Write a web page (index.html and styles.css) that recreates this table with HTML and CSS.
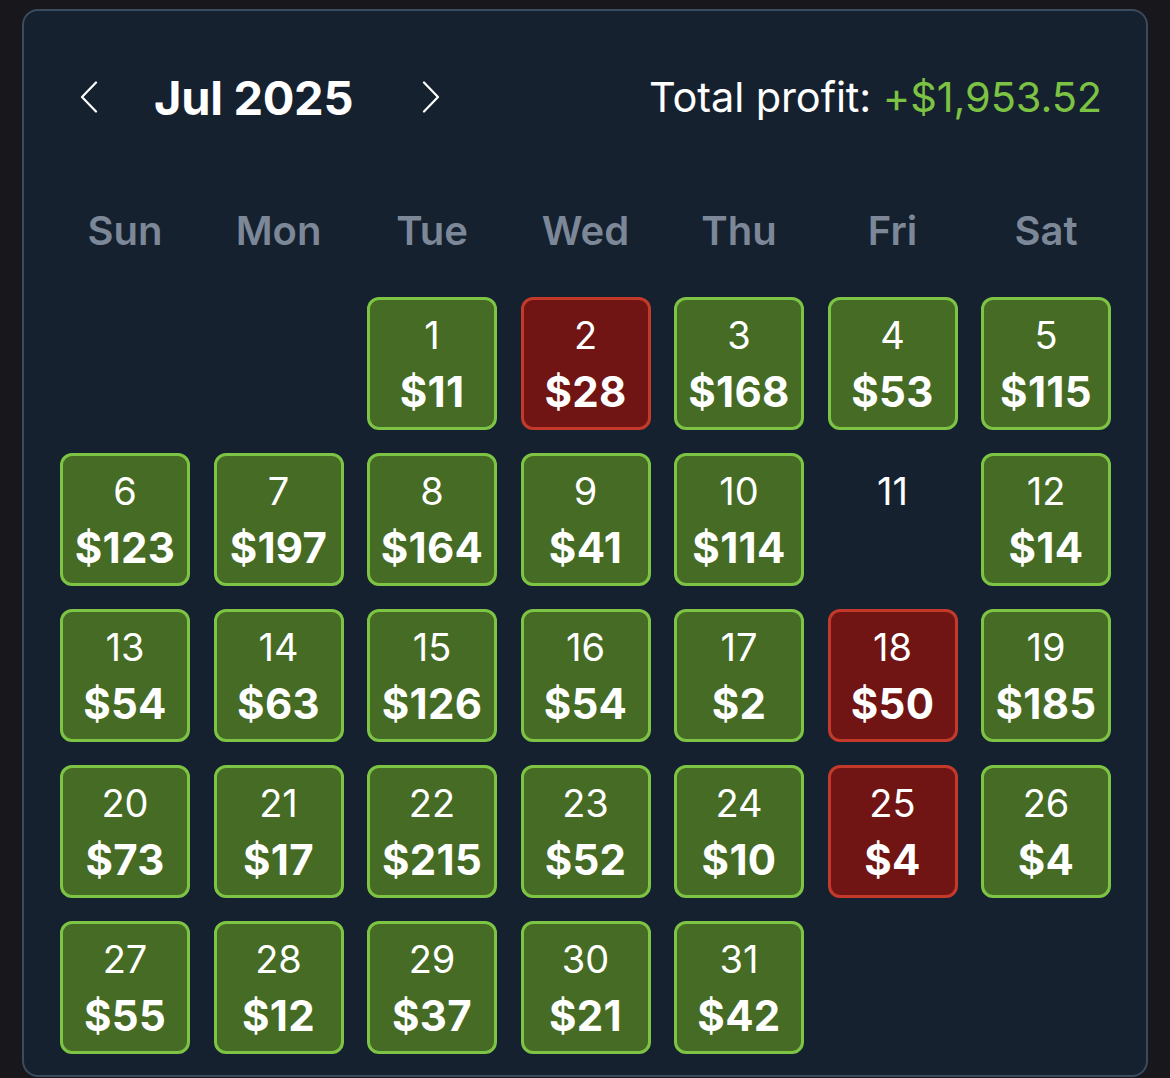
FILE: index.html
```html
<!DOCTYPE html>
<html lang="en">
<head>
<meta charset="utf-8">
<title>Calendar</title>
<link rel="stylesheet" href="styles.css">
</head>
<body>
<div class="panel">
  <div class="header">
    <div class="nav">
      <button class="chev" aria-label="Previous month">
        <svg width="18" height="32" viewBox="0 0 18 32"><path d="M16 1.5 L2 16 L16 30.5" fill="none" stroke="#ffffff" stroke-width="2.2" stroke-linecap="round" stroke-linejoin="round"/></svg>
      </button>
      <div class="title">Jul 2025</div>
      <button class="chev" aria-label="Next month">
        <svg width="18" height="32" viewBox="0 0 18 32"><path d="M2 1.5 L16 16 L2 30.5" fill="none" stroke="#ffffff" stroke-width="2.2" stroke-linecap="round" stroke-linejoin="round"/></svg>
      </button>
    </div>
    <div class="total">Total profit: <span class="pos">+$1,953.52</span></div>
  </div>
  <div class="weekdays">
    <div>Sun</div><div>Mon</div><div>Tue</div><div>Wed</div><div>Thu</div><div>Fri</div><div>Sat</div>
  </div>
  <div class="grid">
    <div class="blank"></div>
    <div class="blank"></div>
    <div class="cell win"><span class="d">1</span><span class="v">$11</span></div>
    <div class="cell loss"><span class="d">2</span><span class="v">$28</span></div>
    <div class="cell win"><span class="d">3</span><span class="v">$168</span></div>
    <div class="cell win"><span class="d">4</span><span class="v">$53</span></div>
    <div class="cell win"><span class="d">5</span><span class="v">$115</span></div>

    <div class="cell win"><span class="d">6</span><span class="v">$123</span></div>
    <div class="cell win"><span class="d">7</span><span class="v">$197</span></div>
    <div class="cell win"><span class="d">8</span><span class="v">$164</span></div>
    <div class="cell win"><span class="d">9</span><span class="v">$41</span></div>
    <div class="cell win"><span class="d">10</span><span class="v">$114</span></div>
    <div class="cell empty"><span class="d">11</span></div>
    <div class="cell win"><span class="d">12</span><span class="v">$14</span></div>

    <div class="cell win"><span class="d">13</span><span class="v">$54</span></div>
    <div class="cell win"><span class="d">14</span><span class="v">$63</span></div>
    <div class="cell win"><span class="d">15</span><span class="v">$126</span></div>
    <div class="cell win"><span class="d">16</span><span class="v">$54</span></div>
    <div class="cell win"><span class="d">17</span><span class="v">$2</span></div>
    <div class="cell loss"><span class="d">18</span><span class="v">$50</span></div>
    <div class="cell win"><span class="d">19</span><span class="v">$185</span></div>

    <div class="cell win"><span class="d">20</span><span class="v">$73</span></div>
    <div class="cell win"><span class="d">21</span><span class="v">$17</span></div>
    <div class="cell win"><span class="d">22</span><span class="v">$215</span></div>
    <div class="cell win"><span class="d">23</span><span class="v">$52</span></div>
    <div class="cell win"><span class="d">24</span><span class="v">$10</span></div>
    <div class="cell loss"><span class="d">25</span><span class="v">$4</span></div>
    <div class="cell win"><span class="d">26</span><span class="v">$4</span></div>

    <div class="cell win"><span class="d">27</span><span class="v">$55</span></div>
    <div class="cell win"><span class="d">28</span><span class="v">$12</span></div>
    <div class="cell win"><span class="d">29</span><span class="v">$37</span></div>
    <div class="cell win"><span class="d">30</span><span class="v">$21</span></div>
    <div class="cell win"><span class="d">31</span><span class="v">$42</span></div>
  </div>
</div>
</body>
</html>
```

FILE: styles.css
```css
* { box-sizing: border-box; }
html, body { margin: 0; padding: 0; }
body {
  background: #18171c;
  font-family: "Inter", "Noto Sans", sans-serif;
  color: #ffffff;
  height: 1078px;
  overflow: hidden;
}
.panel {
  margin: 9px 0 0 22px;
  width: 1126px;
  height: 1068px;
  background: #16212f;
  border: 2px solid #3b4b5e;
  border-radius: 16px;
  padding: 56px 35px 0 36px;
}
.header {
  display: flex;
  align-items: center;
  justify-content: space-between;
  height: 60px;
  padding: 0 9px 0 20px;
}
.nav {
  display: flex;
  align-items: center;
}
.chev {
  background: none;
  border: 0;
  padding: 0;
  width: 18px;
  height: 32px;
  display: flex;
  cursor: pointer;
}
.title {
  font-size: 47px;
  font-weight: 700;
  letter-spacing: -0.3px;
  margin: 0 69px 0 56px;
}
.total {
  font-size: 41.5px;
  font-weight: 400;
  letter-spacing: -0.1px;
}
.pos { color: #7cc243; }
.weekdays {
  margin-top: 78px;
  display: grid;
  grid-template-columns: repeat(7, 1fr);
  column-gap: 23.5px;
  height: 50px;
  align-items: center;
}
.weekdays div {
  text-align: center;
  font-size: 40px;
  font-weight: 600;
  color: #7c8898;
}
.grid {
  margin-top: 42px;
  display: grid;
  grid-template-columns: repeat(7, 1fr);
  column-gap: 23.5px;
  row-gap: 23px;
}
.cell {
  height: 133px;
  border-radius: 12px;
  border: 3px solid transparent;
  display: flex;
  flex-direction: column;
  align-items: center;
  padding-top: 12px;
  gap: 11px;
}
.win { background: #456b24; border-color: #7dc444; }
.loss { background: #701514; border-color: #c33a2b; }
.d {
  font-size: 38px;
  line-height: 46px;
  font-weight: 400;
}
.v {
  font-size: 42px;
  line-height: 46px;
  font-weight: 700;
  letter-spacing: 0.3px;
}
```
